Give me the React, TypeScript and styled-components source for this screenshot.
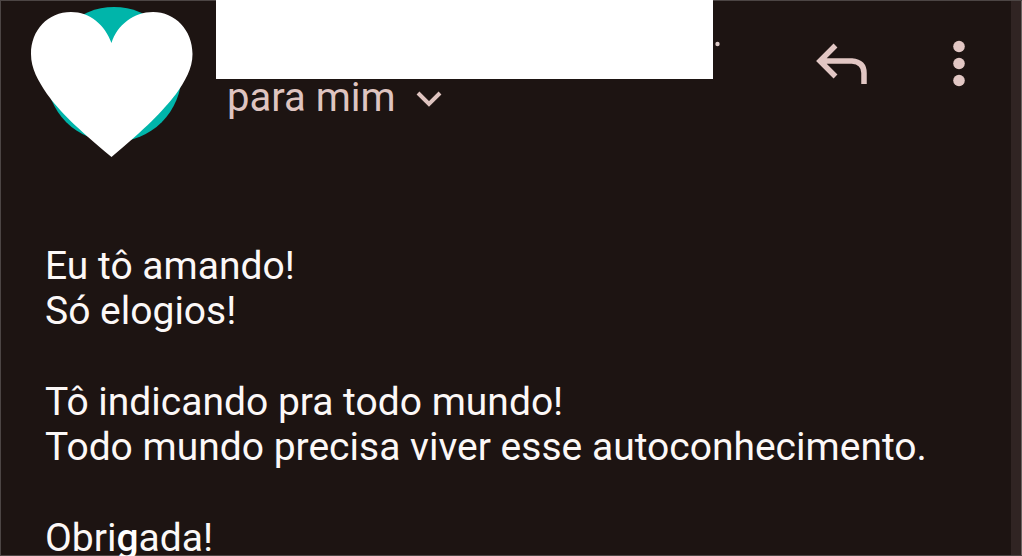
import React from "react";
import styled, { createGlobalStyle } from "styled-components";

const GlobalStyle = createGlobalStyle`
  * { box-sizing: border-box; }
  body { margin: 0; background: #1d1412; }
`;

const Page = styled.div`
  min-height: 100vh;
  max-height: 100vh;
  overflow: hidden;
  display: flex;
  background: #1d1412;
  color: #fcf8f7;
  font-family: Roboto, "Liberation Sans", sans-serif;
  box-shadow: inset 0 0 0 1px #4c4544;
`;

const Message = styled.main`
  flex: 1;
  min-width: 0;
`;

const Edge = styled.div`
  width: 11px;
  margin: 1px 0;
  background: #302423;
  border-right: 1px solid #6c6462;
`;

const Header = styled.header`
  display: flex;
  align-items: flex-start;
  height: 160px;
`;

const Avatar = styled.svg`
  flex: none;
  width: 216px;
  height: 160px;
`;

const Sender = styled.div`
  flex: 0 1 497px;
  min-width: 0;
`;

const NameCover = styled.div`
  height: 79px;
  background: #fff;
`;

const Recipient = styled.button`
  display: flex;
  align-items: center;
  gap: 18px;
  height: 38px;
  padding: 0 0 0 11px;
  border: 0;
  background: none;
  color: #dfc4c0;
  font-family: inherit;
  font-size: 40px;
  line-height: 38px;
  white-space: nowrap;
  cursor: pointer;
`;

const Dot = styled.svg`
  flex: none;
  width: 8px;
  height: 80px;
`;

const Actions = styled.div`
  display: flex;
  gap: 72px;
  margin-left: auto;
  padding: 36px 32px 0 0;
`;

const IconButton = styled.button`
  display: flex;
  padding: 0;
  border: 0;
  background: none;
  color: #e2c7c4;
  cursor: pointer;
`;

const Body = styled.article`
  padding: 84px 40px 0 45px;
  font-size: 39px;
  line-height: 45px;
`;

const Paragraph = styled.p`
  margin: 0 0 46px;
`;

const Strong = styled.strong`
  font-weight: 500;
  color: #fff;
`;

export default function App() {
  return (
    <>
      <GlobalStyle />
      <Page>
        <Message>
          <Header>
            <Avatar viewBox="0 0 216 160" aria-hidden="true">
              <circle cx="114" cy="74.500" r="67.500" fill="#00b5aa" />
              <path
                d="M111.500 43C105 25 90 12 71 12C48 12 31 30 31 54C31 69 38 80 47 94C60 112 77 128 111.500 157C146 128 162 112 176 94C185 81 192.500 69 192.500 54C192.500 30 175 12 153 12C134 12 117 25 111.500 43Z"
                fill="#fff"
              />
            </Avatar>
            <Sender>
              <NameCover />
              <Recipient type="button">
                para mim
                <svg width="30" height="24" viewBox="0 0 30 24" fill="none" aria-hidden="true">
                  <path d="M4 7L15 18L26 7" stroke="currentColor" strokeWidth="4" />
                </svg>
              </Recipient>
            </Sender>
            <Dot viewBox="0 0 8 80" aria-hidden="true">
              <circle cx="4.500" cy="44" r="2.200" fill="#dccac7" />
            </Dot>
            <Actions>
              <IconButton type="button" aria-label="Responder">
                <svg width="56" height="56" viewBox="0 0 56 56" fill="none" aria-hidden="true">
                  <path
                    d="M24.500 9.500L9 25L24.500 40.500M10 25H41Q53 26 53 37V48"
                    stroke="currentColor"
                    strokeWidth="5.500"
                  />
                </svg>
              </IconButton>
              <IconButton type="button" aria-label="Mais opções">
                <svg width="40" height="56" viewBox="0 0 40 56" fill="currentColor" aria-hidden="true">
                  <circle cx="20" cy="10.500" r="5.800" />
                  <circle cx="20" cy="27.500" r="5.800" />
                  <circle cx="20" cy="44.500" r="5.800" />
                </svg>
              </IconButton>
            </Actions>
          </Header>
          <Body>
            <Paragraph>
              Eu tô amando!
              <br />
              Só elogios!
            </Paragraph>
            <Paragraph>
              Tô indicando pra todo mundo!
              <br />
              Todo mundo precisa viver esse autoconhecimento.
            </Paragraph>
            <Paragraph>
              Obri<Strong>g</Strong>ada!
            </Paragraph>
          </Body>
        </Message>
        <Edge />
      </Page>
    </>
  );
}
